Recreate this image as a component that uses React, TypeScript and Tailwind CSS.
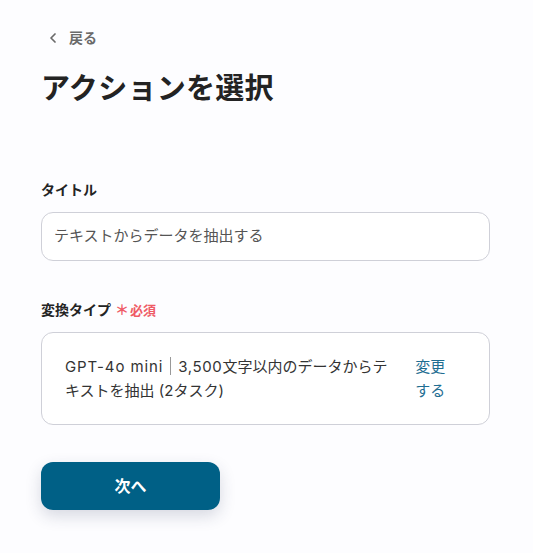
import { ChevronLeft } from "lucide-react";

export default function App() {
  return (
    <div
      className="min-h-screen bg-[#fdfdff] text-[#242424]"
      style={{ fontFamily: 'Inter, "Noto Sans CJK JP", sans-serif' }}
    >
      <div className="w-[449px] ml-[41px] pt-[28px]">
        {/* Back link */}
        <button className="flex items-center gap-[8px] text-[14px] font-bold text-[#6a6a6a] leading-[20px] ml-[4px]">
          <ChevronLeft className="w-[16px] h-[16px]" strokeWidth={2.6} />
          <span>戻る</span>
        </button>

        <h1 className="mt-[21px] text-[29px] font-bold leading-[40px] tracking-[0.01em] text-[#232323]">
          アクションを選択
        </h1>

        {/* Title field */}
        <div className="mt-[71px]">
          <label className="block text-[14px] font-bold leading-[20px]">タイトル</label>
          <div className="mt-[12px] h-[49px] rounded-[12px] border border-[#cfd0d8] bg-white flex items-center px-[12px]">
            <span className="text-[15px] text-[#555]">テキストからデータを抽出する</span>
          </div>
        </div>

        {/* Conversion type */}
        <div className="mt-[39px]">
          <div className="flex items-center leading-[20px]">
            <span className="text-[14px] font-bold">変換タイプ</span>
            <span className="ml-[4px] text-[#ef5b66] text-[14px] font-bold">＊</span>
            <span className="ml-[1px] text-[#ef5b66] text-[13px] font-bold">必須</span>
          </div>
          <div className="mt-[12px] h-[93px] rounded-[12px] border border-[#cfd0d8] bg-white flex items-center pl-[23px] pr-[40px]">
            <div className="w-[336px] text-[15px] leading-[24px] text-[#333] pt-[1px]">
              <span className="tracking-[0.06em]">GPT-4o mini</span>
              <span className="inline-block w-[1px] h-[18px] bg-[#999] mx-[7px] align-[-3px]" />
              <span className="tracking-[0.04em]">3,500</span>
              文字以内のデータからテキストを抽出 (2タスク)
            </div>
            <button className="ml-[16px] w-[34px] text-left text-[15px] leading-[24px] text-[#1f6e92]">
              変更する
            </button>
          </div>
        </div>

        <button className="mt-[37px] w-[179px] h-[48px] rounded-[12px] bg-[#006086] text-white text-[16px] font-bold shadow-[0_6px_16px_rgba(40,50,90,0.18)]">
          次へ
        </button>
      </div>
    </div>
  );
}
